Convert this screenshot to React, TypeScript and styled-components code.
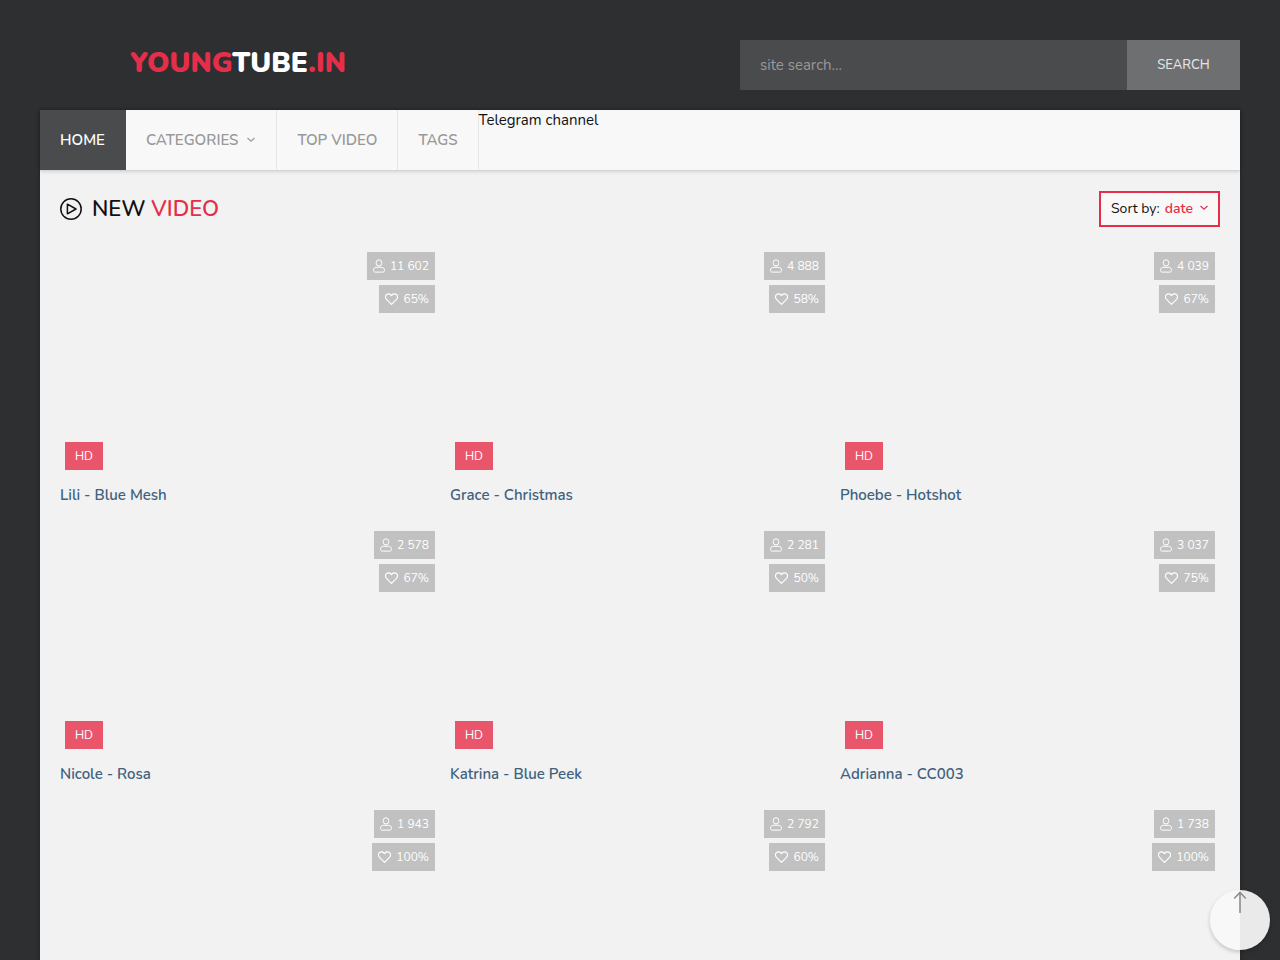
import React from 'react';
import styled, { createGlobalStyle } from 'styled-components';

const accent = '#e62e4a';

const GlobalStyle = createGlobalStyle`
  *, *::before, *::after { box-sizing: border-box; }
  body {
    margin: 0;
    background: #2e2f31;
    color: #111;
    font-family: Nunito, Lato, "Open Sans", sans-serif;
    font-size: 15px;
    line-height: 20px;
  }
  a { color: inherit; text-decoration: none; }
  h1, h2, ul, p { margin: 0; padding: 0; font-weight: 400; }
  ul { list-style: none; }
  button, input { font-family: inherit; border: 0; border-radius: 0; margin: 0; }
`;

const Page = styled.div`
  max-width: 1280px;
  margin: 0 auto;
  padding: 0 40px;
`;

const Header = styled.header`
  display: flex;
  justify-content: space-between;
  align-items: center;
  padding: 40px 0 20px;
`;

const Logo = styled.a`
  margin-left: 90px;
  padding-bottom: 4px;
  font-size: 28px;
  line-height: 40px;
  font-weight: 900;
  color: ${accent};
`;

const LogoMiddle = styled.span`
  color: #fff;
`;

const Search = styled.form`
  display: flex;
  width: 500px;
  height: 50px;
`;

const SearchInput = styled.input`
  flex: 1;
  min-width: 0;
  padding: 0 20px;
  background: #4a4b4d;
  color: #fff;
  font-size: 15px;
  outline: 0;
  &::placeholder { color: #999; opacity: 1; }
`;

const SearchButton = styled.button`
  width: 113px;
  background: #6e6f71;
  color: #e4e4e4;
  font-size: 13px;
  font-weight: 500;
  padding: 0;
`;

const Main = styled.main`
  background: #f2f2f2;
  box-shadow: 0 0 4px rgba(0, 0, 0, 0.3);
`;

const Nav = styled.nav`
  background: #f8f8f8;
  box-shadow: 0 1px 4px rgba(0, 0, 0, 0.2);
`;

const NavList = styled.ul`
  display: flex;
  min-height: 60px;
`;

const NavItem = styled.li<{ $active?: boolean }>`
  border-right: 1px solid ${p => (p.$active ? '#4a4b4d' : '#e6e6e6')};
  background: ${p => (p.$active ? '#4a4b4d' : 'transparent')};
  color: ${p => (p.$active ? '#fff' : '#999')};
  font-weight: 600;
`;

const NavLink = styled.a`
  display: flex;
  align-items: center;
  gap: 8px;
  height: 60px;
  padding: 0 20px;
  white-space: nowrap;
`;

const Content = styled.div`
  padding: 21px 20px 20px;
`;

const HeadingRow = styled.div`
  display: flex;
  align-items: center;
  justify-content: space-between;
  margin-bottom: 20px;
`;

const Heading = styled.h1`
  display: flex;
  align-items: center;
  gap: 10px;
  font-size: 22px;
  line-height: 30px;
  font-weight: 600;
`;

const Accent = styled.span`
  color: ${accent};
`;

const SortButton = styled.button`
  display: flex;
  align-items: center;
  gap: 5px;
  width: 121px;
  height: 36px;
  padding: 0 0 2px 10px;
  border: 2px solid ${accent};
  background: #f8f8f8;
  color: #111;
  font-size: 14px;
  white-space: nowrap;
`;

const SortValue = styled(Accent)`
  display: flex;
  align-items: center;
  gap: 6px;
  font-weight: 600;
`;

const Grid = styled.ul`
  display: grid;
  grid-template-columns: repeat(3, 1fr);
  gap: 10px;
`;

const Thumb = styled.a`
  display: flex;
  flex-direction: column;
  align-items: flex-end;
  gap: 5px;
  aspect-ratio: 5 / 3;
  padding: 5px;
`;

const Badge = styled.span`
  display: flex;
  align-items: center;
  gap: 5px;
  height: 28px;
  padding: 0 6px;
  background: #c1c1c1;
  color: #fff;
  font-size: 12px;
`;

const Quality = styled.span`
  display: flex;
  align-items: center;
  justify-content: center;
  width: 38px;
  height: 28px;
  margin-top: auto;
  align-self: flex-start;
  background: #e9566c;
  color: #fff;
  font-size: 12px;
`;

const Title = styled.a`
  display: block;
  padding: 10px 0;
  line-height: 21px;
  font-weight: 600;
  color: #40617e;
`;

const ToTop = styled.button`
  position: fixed;
  right: 10px;
  bottom: 10px;
  display: flex;
  justify-content: center;
  width: 60px;
  height: 60px;
  padding: 1px 0 0;
  border-radius: 50%;
  background: rgba(249, 249, 249, 0.93);
  box-shadow: 0 2px 4px rgba(0, 0, 0, 0.2);
`;

const Chevron = () => (
  <svg width="10" height="10" viewBox="0 0 10 10" fill="none" stroke="currentColor" strokeWidth="1.2">
    <path d="M1.500 3 5 6.300 8.500 3" />
  </svg>
);

const PlayIcon = () => (
  <svg width="22" height="22" viewBox="0 0 22 22" fill="none" stroke="currentColor" strokeWidth="1.5" strokeLinejoin="round">
    <circle cx="11" cy="11" r="10.2" />
    <path d="M7.4 6.200v9.600L16 11z" />
  </svg>
);

const UserIcon = () => (
  <svg width="12" height="14" viewBox="0 0 12 14" fill="none" stroke="currentColor" strokeWidth="1">
    <rect x="3.200" y="0.800" width="5.600" height="6.200" rx="2.800" />
    <path d="M3.200 8.300h5.600c1.500 0 2.700 1.300 2.700 3 0 1.200-.6 1.800-1.700 1.800H2.200C1.100 13.100.5 12.500.5 11.300c0-1.700 1.200-3 2.700-3z" />
  </svg>
);

const HeartIcon = () => (
  <svg width="13" height="12" viewBox="0 0 13 12" fill="none" stroke="currentColor" strokeWidth="1.200" strokeLinejoin="round">
    <path d="M6.500 11.300 1.500 6.300C.3 5 .3 2.900 1.400 1.700c1.300-1.300 3.700-1.200 5.100.9C7.900.5 10.300.4 11.600 1.700c1.100 1.200 1.100 3.300-.1 4.600z" />
  </svg>
);

const ArrowUp = () => (
  <svg width="14" height="22" viewBox="0 0 14 22" fill="none" stroke="#8e8e8e" strokeWidth="1.600">
    <path d="M7 22V1.500M1.200 7.500 7 1.500l5.800 6" />
  </svg>
);

const videos = [
  { title: 'Lili - Blue Mesh', views: '11 602', rating: '65%' },
  { title: 'Grace - Christmas', views: '4 888', rating: '58%' },
  { title: 'Phoebe - Hotshot', views: '4 039', rating: '67%' },
  { title: 'Nicole - Rosa', views: '2 578', rating: '67%' },
  { title: 'Katrina - Blue Peek', views: '2 281', rating: '50%' },
  { title: 'Adrianna - CC003', views: '3 037', rating: '75%' },
  { title: '', views: '1 943', rating: '100%' },
  { title: '', views: '2 792', rating: '60%' },
  { title: '', views: '1 738', rating: '100%' },
];

export default function App() {
  return (
    <>
      <GlobalStyle />
      <Page>
        <Header>
          <Logo href="#">YOUNG<LogoMiddle>TUBE</LogoMiddle>.IN</Logo>
          <Search role="search">
            <SearchInput type="text" placeholder="site search..." aria-label="site search" />
            <SearchButton type="submit">SEARCH</SearchButton>
          </Search>
        </Header>
        <Main>
          <Nav>
            <NavList>
              <NavItem $active><NavLink href="#">HOME</NavLink></NavItem>
              <NavItem><NavLink href="#">CATEGORIES <Chevron /></NavLink></NavItem>
              <NavItem><NavLink href="#">TOP VIDEO</NavLink></NavItem>
              <NavItem><NavLink href="#">TAGS</NavLink></NavItem>
              <li><a href="#">Telegram channel</a></li>
            </NavList>
          </Nav>
          <Content>
            <HeadingRow>
              <Heading><PlayIcon /><span>NEW <Accent>VIDEO</Accent></span></Heading>
              <SortButton type="button">
                <span>Sort by:</span>
                <SortValue>date <Chevron /></SortValue>
              </SortButton>
            </HeadingRow>
            <Grid>
              {videos.map((v, i) => (
                <li key={i}>
                  <Thumb href="#">
                    <Badge><UserIcon />{v.views}</Badge>
                    <Badge><HeartIcon />{v.rating}</Badge>
                    {v.title && <Quality>HD</Quality>}
                  </Thumb>
                  {v.title && <Title href="#">{v.title}</Title>}
                </li>
              ))}
            </Grid>
          </Content>
        </Main>
      </Page>
      <ToTop type="button" aria-label="Back to top"><ArrowUp /></ToTop>
    </>
  );
}
